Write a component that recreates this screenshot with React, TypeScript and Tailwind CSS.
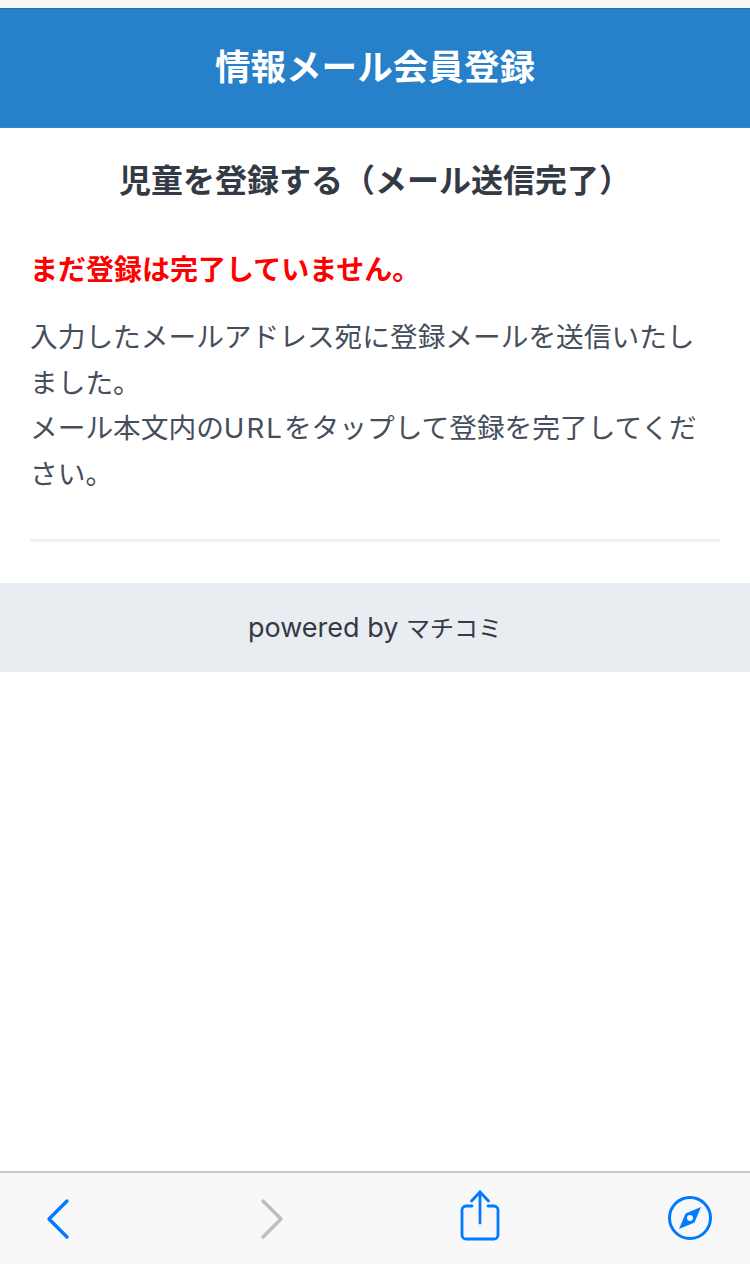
const font = "font-['Inter','Noto_Sans_CJK_JP',sans-serif]";

export default function App() {
  return (
    <div className={`flex h-[1264px] w-[750px] flex-col overflow-hidden bg-white ${font}`}>
      <div className="h-2 bg-[#f7f7f7]" />
      <header className="flex h-[120px] items-center justify-center border-t border-b border-t-[#2271b3] border-b-[#3088d2] bg-[#2780ca]">
        <h1 className="text-[35.6px] leading-none font-semibold text-white">情報メール会員登録</h1>
      </header>

      <main className="px-[30px]">
        <h2 className="mt-[34px] text-center text-[32px] leading-[38px] font-semibold text-[#343a44]">
          児童を登録する（メール送信完了）
        </h2>
        <p className="mt-[50px] text-[28px] leading-[40px] font-semibold text-[#ff0000]">
          まだ登録は完了していません。
        </p>
        <p className="mt-[25px] text-[27.7px] leading-[45.5px] text-[#454e5b]">
          入力したメールアドレス宛に登録メールを送信いたし
          <br />
          ました。
          <br />
          メール本文内の<span className="tracking-[2px]">URL</span>をタップして登録を完了してくだ
          <br />
          さい。
        </p>
        <hr className="mt-[42px] h-[3px] border-0 bg-[#f0f0f0]" />
      </main>

      <footer className="mt-[41px] flex h-[89px] items-center justify-center bg-[#e9ecf1]">
        <span className="text-[27px] leading-none text-[#343a44]">
          powered by <span className="text-[24px]">マチコミ</span>
        </span>
      </footer>

      <nav className="mt-auto flex h-[93px] items-start border-t-2 border-[#c9c9c9] bg-[#f8f8f8]">
        <svg className="mt-[25px] ml-[44px]" width="28" height="42" viewBox="0 0 28 42" fill="none" stroke="#007aff" strokeWidth="3.4" strokeLinecap="round" strokeLinejoin="round">
          <path d="M23 3 5 21l18 18" />
        </svg>
        <svg className="mt-[25px] ml-[186px]" width="28" height="42" viewBox="0 0 28 42" fill="none" stroke="#bdbdbd" strokeWidth="3.4" strokeLinecap="round" strokeLinejoin="round">
          <path d="m5 3 18 18L5 39" />
        </svg>
        <svg className="mt-[16px] ml-[173px]" width="42" height="54" viewBox="0 0 42 54" fill="none" stroke="#007aff" strokeWidth="2.8" strokeLinecap="round" strokeLinejoin="round">
          <path d="M13 17H7a4 4 0 0 0-4 4v25a4 4 0 0 0 4 4h28a4 4 0 0 0 4-4V21a4 4 0 0 0-4-4h-6" />
          <path d="M21 34V3" />
          <path d="M12.5 12 21 3l8.5 9" />
        </svg>
        <svg className="mt-[22px] ml-[166px]" width="46" height="46" viewBox="0 0 46 46">
          <circle cx="23" cy="23" r="20.5" fill="none" stroke="#007aff" strokeWidth="3" />
          <path d="M34 12 27.5 27.5 12 34l6.5-15.5z" fill="#007aff" />
          <circle cx="23" cy="23" r="3" fill="#f8f8f8" />
        </svg>
      </nav>
    </div>
  );
}
